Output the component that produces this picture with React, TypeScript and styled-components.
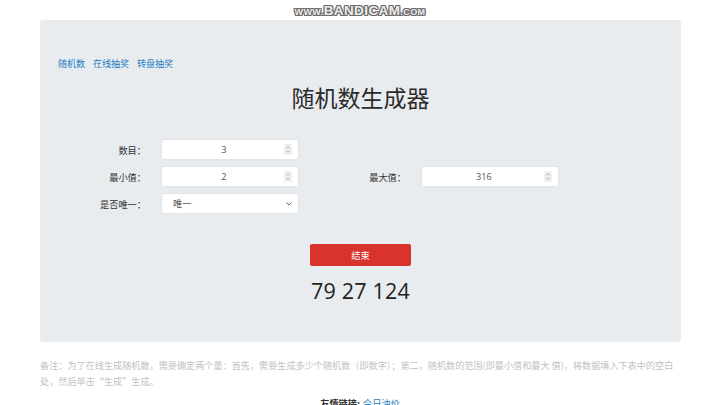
import React from "react";
import styled, { createGlobalStyle } from "styled-components";

const GlobalStyle = createGlobalStyle`
  html, body {
    margin: 0;
    padding: 0;
    background: #ffffff;
  }
  body {
    font-family: "Open Sans", "Noto Sans CJK SC", sans-serif;
    font-size: 9.2px;
    color: #333;
  }
`;

const Page = styled.div`
  width: 720px;
  height: 405px;
  overflow: hidden;
`;

const TopBar = styled.div`
  height: 20px;
  display: flex;
  align-items: center;
  justify-content: center;
`;

const Watermark = styled.div`
  font-family: "Liberation Sans", Arial, sans-serif;
  font-weight: 700;
  color: #ececec;
  letter-spacing: 0.4px;
  text-transform: uppercase;
  text-shadow:
    -1px 0 0 #6b6b6b, 1px 0 0 #6b6b6b, 0 -1px 0 #6b6b6b, 0 1px 0 #6b6b6b,
    -1px -1px 0 #6b6b6b, 1px 1px 0 #6b6b6b, -1px 1px 0 #6b6b6b, 1px -1px 0 #6b6b6b;
  display: flex;
  align-items: baseline;
  padding-top: 1px;
  margin-left: 0px;

  small {
    font-size: 9px;
  }
  span {
    font-size: 13.5px;
  }
`;

const Panel = styled.div`
  margin: 0 39px 0 40px;
  background: #e9ecef;
  border-radius: 3px;
  padding: 36px 18px 37px;
`;

const Nav = styled.div`
  display: flex;
  gap: 8px;
  height: 14px;
  align-items: center;

  a {
    color: #1a7cc6;
    text-decoration: none;
    font-size: 9px;
  }
`;

const Title = styled.h1`
  margin: 13px 0 0;
  text-align: center;
  font-weight: 400;
  font-size: 23px;
  line-height: 28px;
  color: #2b2b2b;
  font-family: "Noto Sans CJK SC", sans-serif;
`;

const Form = styled.div`
  margin-top: 28px;
  display: grid;
  grid-template-columns: 88px 138px 92px 138px;
  column-gap: 15px;
  row-gap: 6px;
  align-items: center;
`;

const Label = styled.label`
  text-align: right;
  color: #333;
  font-size: 9.2px;
`;

const Field = styled.div<{ $align?: "center" | "left" }>`
  height: 21px;
  box-sizing: border-box;
  background: #fff;
  border: 1px solid #e1e4e8;
  border-radius: 3px;
  display: flex;
  align-items: center;
  padding: 0 6px 0 ${(p) => (p.$align === "left" ? "11px" : "4px")};

  input,
  select {
    flex: 1;
    min-width: 0;
    border: none;
    outline: none;
    background: transparent;
    font-family: inherit;
    font-size: 9.2px;
    color: #555;
    padding: 0;
    text-align: ${(p) => (p.$align === "left" ? "left" : "center")};
    appearance: none;
    -webkit-appearance: none;
  }
`;

const Spinner = styled.svg`
  width: 8px;
  height: 11px;
  flex: none;
  margin-left: 2px;
`;

const Chevron = styled.svg`
  width: 6px;
  height: 4px;
  flex: none;
`;

const Actions = styled.div`
  margin-top: 30px;
  display: flex;
  flex-direction: column;
  align-items: center;
`;

const Button = styled.button`
  width: 101px;
  height: 22px;
  border: none;
  border-radius: 2px;
  background: #d9332e;
  color: #fff;
  font-family: "Noto Sans CJK SC", sans-serif;
  font-size: 9.2px;
  cursor: pointer;
`;

const Result = styled.div`
  margin-top: 11px;
  font-size: 21.5px;
  line-height: 28px;
  color: #222;
  letter-spacing: 0.2px;
`;

const Note = styled.p`
  margin: 15px 40px 0;
  font-size: 9.15px;
  line-height: 16px;
  color: #c2c2c2;
  font-family: "Noto Sans CJK SC", sans-serif;
`;

const Friends = styled.div`
  margin-top: 6px;
  text-align: center;
  font-size: 9.2px;
  line-height: 16px;
  font-family: "Noto Sans CJK SC", sans-serif;
  color: #333;
  font-weight: 700;

  a {
    color: #1a7cc6;
    font-weight: 400;
    text-decoration: none;
    margin-left: 3px;
  }
`;

const SpinIcon = () => (
  <Spinner viewBox="0 0 8 11">
    <rect x="0" y="0" width="8" height="11" rx="1" fill="#efefef" />
    <path d="M2.3 4.2 L4 2.6 L5.7 4.2" fill="none" stroke="#9a9a9a" strokeWidth="0.8" />
    <path d="M2.3 6.8 L4 8.4 L5.7 6.8" fill="none" stroke="#9a9a9a" strokeWidth="0.8" />
  </Spinner>
);

const NumberField = ({ value }: { value: string }) => (
  <Field>
    <input type="text" defaultValue={value} />
    <SpinIcon />
  </Field>
);

export default function App() {
  return (
    <Page>
      <GlobalStyle />
      <TopBar>
        <Watermark>
          <small>www.</small>
          <span>Bandicam</span>
          <small>.com</small>
        </Watermark>
      </TopBar>
      <Panel>
        <Nav>
          <a href="#">随机数</a>
          <a href="#">在线抽奖</a>
          <a href="#">转盘抽奖</a>
        </Nav>
        <Title>随机数生成器</Title>
        <Form>
          <Label>数目：</Label>
          <NumberField value="3" />
          <span />
          <span />

          <Label>最小值：</Label>
          <NumberField value="2" />
          <Label>最大值：</Label>
          <NumberField value="316" />

          <Label>是否唯一：</Label>
          <Field $align="left">
            <select defaultValue="1">
              <option value="1">唯一</option>
              <option value="0">不唯一</option>
            </select>
            <Chevron viewBox="0 0 6 4">
              <path d="M0.6 0.6 L3 3 L5.4 0.6" fill="none" stroke="#555" strokeWidth="0.9" />
            </Chevron>
          </Field>
        </Form>
        <Actions>
          <Button>结束</Button>
          <Result>79 27 124</Result>
        </Actions>
      </Panel>
      <Note>
        备注：为了在线生成随机数，需要确定两个量：首先，需要生成多少个随机数（即数字）；第二，随机数的范围(即最小值和最大
        值)，将数据填入下表中的空白处，然后单击“生成”生成。
      </Note>
      <Friends>
        友情链接:<a href="#">今日油价</a>
      </Friends>
    </Page>
  );
}
